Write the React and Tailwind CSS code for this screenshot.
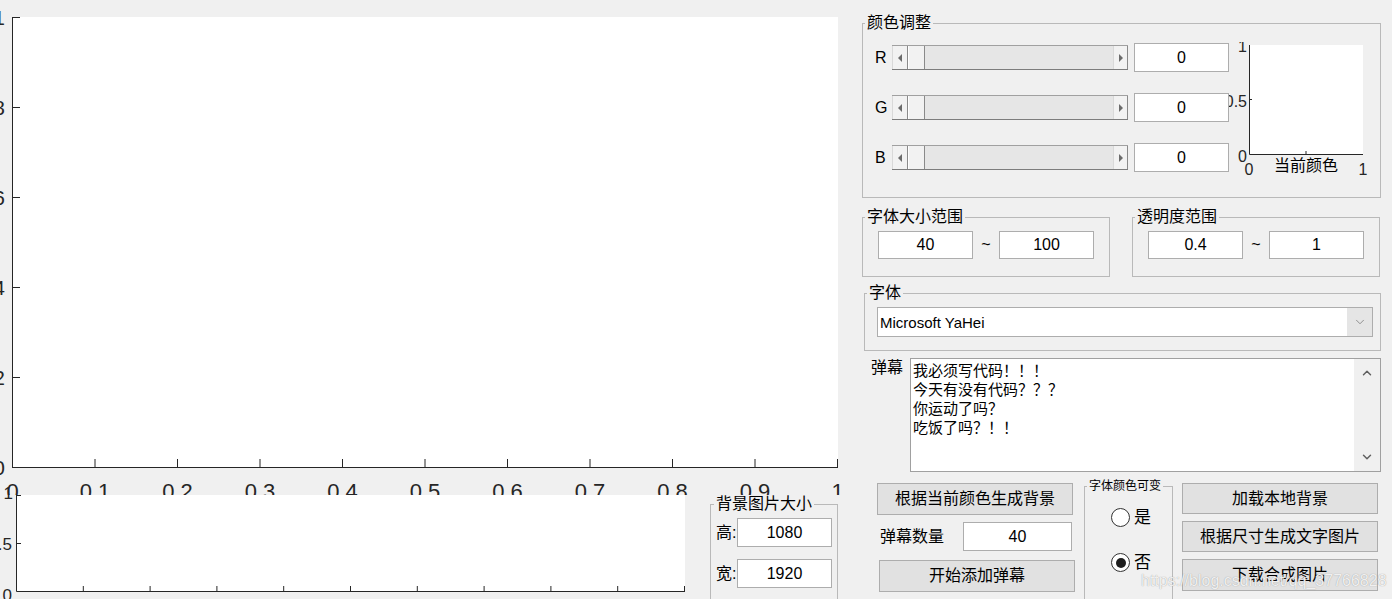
import { ChevronDown, ChevronUp } from 'lucide-react';

const ink = '#262626';

function MainAxes() {
  const xl = ['0', '0.1', '0.2', '0.3', '0.4', '0.5', '0.6', '0.7', '0.8', '0.9', '1'];
  const yl = ['0', '0.2', '0.4', '0.6', '0.8', '1'];
  return (
    <svg width="850" height="495" className="block shrink-0">
      <rect x="12" y="17" width="826" height="450" fill="#fff" />
      <path d="M12.5 17V467.5H838" stroke={ink} fill="none" />
      {xl.map((t, i) => (
        <g key={t}>
          <line x1={12.5 + i * 82.5} y1="467" x2={12.5 + i * 82.5} y2="459" stroke={ink} />
          <text x={12.5 + i * 82.5} y="499" textAnchor="middle" fontSize="22" fill={ink} fontFamily="Liberation Sans, sans-serif">{t}</text>
        </g>
      ))}
      {yl.map((t, i) => (
        <g key={t}>
          <line x1="12" y1={467.5 - i * 90} x2="20" y2={467.5 - i * 90} stroke={ink} />
          <text x="5" y={475 - i * 90} textAnchor="end" fontSize="21" fill={ink} fontFamily="Liberation Sans, sans-serif">{t}</text>
        </g>
      ))}
    </svg>
  );
}

function SmallAxes() {
  const ticks = [1, 2, 3, 4, 5, 6, 7, 8, 9, 10];
  return (
    <svg width="700" height="104" className="block shrink-0 overflow-visible">
      <rect x="16" y="0" width="669" height="96" fill="#fff" />
      <path d="M16.5 0V96.5H685" stroke={ink} fill="none" />
      {ticks.map((i) => (
        <line key={i} x1={16.5 + i * 66.8} y1="96" x2={16.5 + i * 66.8} y2="91" stroke={ink} />
      ))}
      <line x1="16" y1="0.5" x2="21" y2="0.5" stroke={ink} />
      <line x1="16" y1="48.5" x2="21" y2="48.5" stroke={ink} />
      <text x="13" y="4" textAnchor="end" fontSize="17" fill={ink} fontFamily="Liberation Sans, sans-serif">1</text>
      <text x="12" y="55" textAnchor="end" fontSize="17" fill={ink} fontFamily="Liberation Sans, sans-serif">0.5</text>
      <text x="12" y="106" textAnchor="end" fontSize="17" fill={ink} fontFamily="Liberation Sans, sans-serif">0</text>
    </svg>
  );
}

function PreviewAxes() {
  return (
    <svg width="146" height="140" className="block shrink-0 -mt-[1px]">
      <rect x="20" y="3" width="114" height="109" fill="#fff" />
      <path d="M20.5 3V112.5H134" stroke={ink} fill="none" />
      <line x1="20" y1="57.5" x2="23" y2="57.5" stroke={ink} />
      <line x1="77" y1="112" x2="77" y2="109" stroke={ink} />
      <text x="18" y="10" textAnchor="end" fontSize="16" fill={ink} fontFamily="Liberation Sans, sans-serif">1</text>
      <text x="18" y="65" textAnchor="end" fontSize="16" fill={ink} fontFamily="Liberation Sans, sans-serif">0.5</text>
      <text x="18" y="120" textAnchor="end" fontSize="16" fill={ink} fontFamily="Liberation Sans, sans-serif">0</text>
      <text x="20" y="133" textAnchor="middle" fontSize="16" fill={ink} fontFamily="Liberation Sans, sans-serif">0</text>
      <text x="134" y="133" textAnchor="middle" fontSize="16" fill={ink} fontFamily="Liberation Sans, sans-serif">1</text>
      <text x="77" y="129" textAnchor="middle" fontSize="16" fill="#000" fontFamily="Noto Sans CJK SC, sans-serif">当前颜色</text>
    </svg>
  );
}

function Arrow({ dir }) {
  return (
    <svg width="5" height="8" viewBox="0 0 5 8">
      <polygon points={dir === 'left' ? '4,0 4,8 0,4' : '1,0 1,8 5,4'} fill="#6b6b6b" />
    </svg>
  );
}

function Slider() {
  return (
    <div className="flex h-[25px] w-[236px] border-t border-b border-t-[#a0a0a0] border-b-[#7c7c7c] bg-[#e6e6e6]">
      <div className="flex w-[16px] items-center justify-center border-r border-l border-l-[#d9d9d9] border-r-[#8a8a8a] bg-[#f2f2f2]">
        <Arrow dir="left" />
      </div>
      <div className="w-[17px] border-r border-l border-l-white border-r-[#8a8a8a] bg-[#f2f2f2]" />
      <div className="flex-1" />
      <div className="flex w-[15px] items-center justify-center border-r border-l border-l-[#d9d9d9] border-r-[#8a8a8a] bg-[#f2f2f2]">
        <Arrow dir="right" />
      </div>
    </div>
  );
}

function Edit({ value, className = '' }) {
  return (
    <div className={`flex shrink-0 items-center justify-center border border-[#adadad] bg-white text-[16px] leading-none text-black ${className}`}>
      {value}
    </div>
  );
}

function Button({ children, className = '' }) {
  return (
    <div className={`flex shrink-0 items-center justify-center border border-[#adadad] bg-[#e1e1e1] text-[16px] leading-none text-black ${className}`}>
      {children}
    </div>
  );
}

function Radio({ label, checked }) {
  return (
    <div className="flex h-[19px] items-center">
      <span className="flex h-[19px] w-[19px] items-center justify-center rounded-full border border-[#333] bg-white">
        {checked && <span className="h-[10px] w-[10px] rounded-full bg-[#1e1e1e]" />}
      </span>
      <span className="ml-[4px] text-[17px] leading-none">{label}</span>
    </div>
  );
}

export default function App() {
  return (
    <div className="relative flex h-[599px] w-[1392px] overflow-hidden bg-[#f0f0f0] font-['Liberation_Sans','Noto_Sans_CJK_SC',sans-serif] text-black">
      <div className="flex w-[850px] shrink-0 flex-col">
        <MainAxes />
        <div className="flex shrink-0">
          <SmallAxes />
          <fieldset className="ml-[10px] h-[113px] w-[128px] shrink-0 border border-[#b9b9b9] px-[5px]">
            <legend className="-ml-[2px] px-[2px] text-[16px] leading-[18px]">背景图片大小</legend>
            <div className="flex flex-col gap-[12px] pt-[5px]">
              <div className="flex items-center">
                <span className="w-[21px] text-[16px] leading-none">高:</span>
                <Edit value="1080" className="h-[29px] w-[95px]" />
              </div>
              <div className="flex items-center">
                <span className="w-[21px] text-[16px] leading-none">宽:</span>
                <Edit value="1920" className="h-[29px] w-[95px]" />
              </div>
            </div>
          </fieldset>
        </div>
      </div>

      <div className="flex flex-1 flex-col pl-[12px] pt-[14px]">
        <fieldset className="h-[184px] w-[519px] shrink-0 border border-[#b9b9b9] px-[2px]">
          <legend className="px-[2px] text-[16px] leading-[18px]">颜色调整</legend>
          <div className="flex pl-[10px] pt-[11px]">
            <div className="flex flex-col gap-[21px]">
              {['R', 'G', 'B'].map((c) => (
                <div key={c} className="flex h-[29px] items-center">
                  <span className="w-[17px] text-[16px] leading-none">{c}</span>
                  <Slider />
                  <Edit value="0" className="ml-[6px] h-[29px] w-[95px]" />
                </div>
              ))}
            </div>
            <PreviewAxes />
          </div>
        </fieldset>

        <div className="mt-[10px] flex shrink-0 gap-[22px]">
          {[
            ['字体大小范围', '40', '100'],
            ['透明度范围', '0.4', '1'],
          ].map(([title, a, b]) => (
            <fieldset key={title} className="h-[69px] w-[248px] shrink-0 border border-[#b9b9b9] px-[2px]">
              <legend className="px-[2px] text-[16px] leading-[18px]">{title}</legend>
              <div className="flex items-center pl-[13px] pt-[5px]">
                <Edit value={a} className="h-[28px] w-[95px]" />
                <span className="w-[26px] text-center text-[16px] leading-none">~</span>
                <Edit value={b} className="h-[28px] w-[95px]" />
              </div>
            </fieldset>
          ))}
        </div>

        <fieldset className="mt-[7px] ml-[2px] h-[67px] w-[517px] shrink-0 border border-[#b9b9b9] px-[2px]">
          <legend className="px-[2px] text-[16px] leading-[18px]">字体</legend>
          <div className="pl-[10px] pt-[5px]">
            <div className="flex h-[30px] w-[496px] border border-[#adadad] bg-white">
              <span className="flex flex-1 items-center pl-[2px] text-[15px] leading-none">Microsoft YaHei</span>
              <span className="flex w-[25px] items-center justify-center bg-[#e5e5e5]">
                <ChevronDown size={14} strokeWidth={1.25} color="#707070" />
              </span>
            </div>
          </div>
        </fieldset>

        <div className="mt-[7px] flex shrink-0">
          <span className="ml-[9px] w-[39px] pt-[1px] text-[16px] leading-[18px]">弹幕</span>
          <div className="flex h-[114px] w-[471px] border border-[#a0a0a0] bg-white">
            <div className="flex-1 pl-[2px] pt-[2px] text-[15px] leading-[19px] whitespace-pre-line">
              {'我必须写代码！！！\n今天有没有代码？？？\n你运动了吗？\n吃饭了吗？！！'}
            </div>
            <div className="flex w-[26px] flex-col items-center justify-between bg-[#f0f0f0] py-[7px]">
              <ChevronUp size={14} strokeWidth={2.5} color="#606060" />
              <ChevronDown size={14} strokeWidth={2.5} color="#606060" />
            </div>
          </div>
        </div>

        <div className="mt-[11px] ml-[15px] flex shrink-0 items-start">
          <div className="flex w-[198px] flex-col">
            <Button className="h-[32px] w-[196px]">根据当前颜色生成背景</Button>
            <div className="mt-[7px] flex items-center">
              <span className="w-[86px] pl-[3px] text-[16px] leading-none">弹幕数量</span>
              <Edit value="40" className="h-[29px] w-[109px]" />
            </div>
            <Button className="mt-[9px] ml-[2px] h-[32px] w-[196px]">开始添加弹幕</Button>
          </div>

          <fieldset className="-mt-[4px] ml-[9px] h-[130px] w-[89px] shrink-0 border border-[#b9b9b9] px-[2px]">
            <legend className="px-[2px] text-[12px] leading-[14px]">字体颜色可变</legend>
            <div className="flex flex-col gap-[26px] pl-[24px] pt-[15px]">
              <Radio label="是" />
              <Radio label="否" checked />
            </div>
          </fieldset>

          <div className="ml-[9px] flex w-[196px] flex-col gap-[7px]">
            <Button className="h-[31px]">加载本地背景</Button>
            <Button className="h-[31px]">根据尺寸生成文字图片</Button>
            <Button className="h-[32px]">下载合成图片</Button>
          </div>
        </div>
      </div>

      <div className="pointer-events-none absolute top-[571px] left-[1141px] text-[16px] leading-[20px] text-white/85 [text-shadow:0_0_1px_#8a8a8a]">
        https://blog.csdn.net/qq_37766828
      </div>
    </div>
  );
}
